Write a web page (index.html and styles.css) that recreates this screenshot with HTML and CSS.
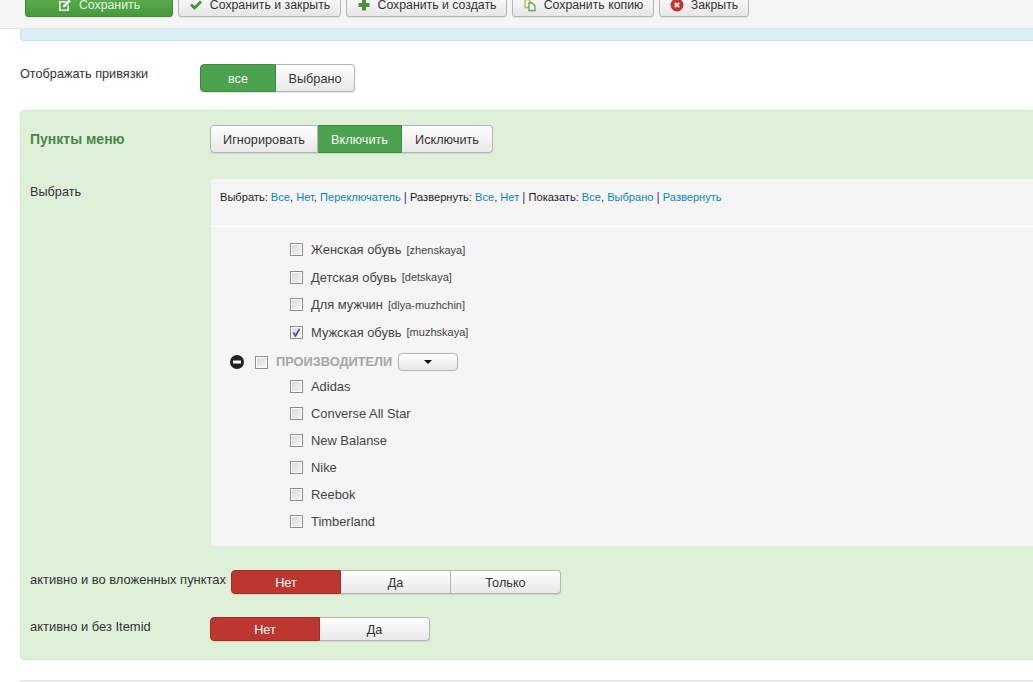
FILE: index.html
```html
<!DOCTYPE html>
<html lang="ru">
<head>
<meta charset="utf-8">
<title>Пункты меню</title>
<link rel="stylesheet" href="styles.css">
</head>
<body>
<div class="toolbar">
  <button class="tb tb-green w-save"><svg viewBox="0 0 14 14" class="ic"><path d="M1 3h8L7.500 4.500H2.500v7h7V8L11 6.500V13H1z" fill="#fff"/><path d="M5 7.500 11 1.500l1.800 1.800-6 6H5z" fill="#fff"/></svg>Сохранить</button>
  <button class="tb w-close"><svg viewBox="0 0 14 14" class="ic"><path d="M1 7.500 3 5.500 5.500 8 11 2.500 13 4.500 5.500 12z" fill="#4a8f3c"/></svg>Сохранить и закрыть</button>
  <button class="tb w-new"><svg viewBox="0 0 14 14" class="ic"><path d="M5 1.500h4v3.500h3.500v4H9v3.500H5V9H1.500V5H5z" fill="#4a8f3c"/></svg>Сохранить и создать</button>
  <button class="tb w-copy"><svg viewBox="0 0 14 14" class="ic"><path d="M2 1.500h5v8H2z" fill="none" stroke="#c9b23c" stroke-width="1.300"/><path d="M6 5h3l3 3v4.500H6z" fill="#fff" stroke="#4fa65a" stroke-width="1.300"/></svg>Сохранить копию</button>
  <button class="tb w-x"><svg viewBox="0 0 14 14" class="ic"><circle cx="7" cy="7" r="6.500" fill="#bd362f"/><path d="M4.800 4.800l4.400 4.400M9.200 4.800l-4.400 4.400" stroke="#fff" stroke-width="1.800"/></svg>Закрыть</button>
</div>
<main class="page">
  <div class="alert"></div>
  <div class="row-top">
    <div class="label-top">Отображать привязки</div>
    <div class="group">
      <span class="seg seg-green w-76">все</span>
      <span class="seg w-79">Выбрано</span>
    </div>
  </div>
  <section class="panel">
    <div class="panel-head">
      <h3 class="panel-title">Пункты меню</h3>
      <div class="group">
        <span class="seg w-107">Игнорировать</span>
        <span class="seg seg-green w-85">Включить</span>
        <span class="seg w-91">Исключить</span>
      </div>
    </div>
    <div class="select-row">
      <div class="select-label">Выбрать</div>
      <div class="tree-box">
        <div class="tree-tools">
          Выбрать: <a>Все</a>, <a>Нет</a>, <a>Переключатель</a> <i>|</i> Развернуть: <a>Все</a>, <a>Нет</a> <i>|</i> Показать: <a>Все</a>, <a>Выбрано</a> <i>|</i> <a>Развернуть</a>
        </div>
        <ul class="tree tree-a">
          <li><span class="cb"></span>Женская обувь <small>[zhenskaya]</small></li>
          <li><span class="cb"></span>Детская обувь <small>[detskaya]</small></li>
          <li><span class="cb"></span>Для мужчин <small>[dlya-muzhchin]</small></li>
          <li><span class="cb checked"><svg viewBox="0 0 13 13"><path d="M3.500 6.500 5.500 10 9.500 3" fill="none" stroke="#3d4f8f" stroke-width="1.600"/></svg></span>Мужская обувь <small>[muzhskaya]</small></li>
        </ul>
        <div class="tree-parent">
          <svg viewBox="0 0 14 14" class="minus"><circle cx="7" cy="7" r="7" fill="#222"/><rect x="3" y="5.500" width="8" height="3" fill="#fff"/></svg>
          <span class="cb"></span>
          <strong>ПРОИЗВОДИТЕЛИ</strong>
          <span class="drop"><b></b></span>
        </div>
        <ul class="tree tree-b">
          <li><span class="cb"></span>Adidas</li>
          <li><span class="cb"></span>Converse All Star</li>
          <li><span class="cb"></span>New Balanse</li>
          <li><span class="cb"></span>Nike</li>
          <li><span class="cb"></span>Reebok</li>
          <li><span class="cb"></span>Timberland</li>
        </ul>
      </div>
    </div>
    <div class="opt-row opt-1">
      <div class="opt-label">активно и во вложенных пунктах</div>
      <div class="group group-s">
        <span class="seg seg-red w-110">Нет</span>
        <span class="seg w-110">Да</span>
        <span class="seg w-110">Только</span>
      </div>
    </div>
    <div class="opt-row opt-2">
      <div class="opt-label opt-fixed">активно и без Itemid</div>
      <div class="group group-s">
        <span class="seg seg-red w-110">Нет</span>
        <span class="seg w-110">Да</span>
      </div>
    </div>
  </section>
  <div class="next-panel"></div>
</main>
</body>
</html>
```
FILE: styles.css
```css
* { box-sizing: border-box; }
html, body { margin: 0; padding: 0; height: 682px; overflow: hidden; background: #fff; }
body { font-family: "Liberation Sans", Arial, sans-serif; font-size: 12.7px; color: #333; }

.toolbar { height: 29px; background: #f5f5f5; border-bottom: 1px solid #e3e3e3; display: flex; align-items: flex-end; gap: 5px; padding: 0 0 11px 25px; }
.tb { flex: none; height: 26px; display: flex; align-items: center; justify-content: center; gap: 7px; padding: 2px 0 0; font: 12.3px "Liberation Sans", Arial, sans-serif; color: #333; border: 1px solid #b5b5b5; border-radius: 3px; background: linear-gradient(#fff, #e6e6e6); box-shadow: 0 1px 1px rgba(0,0,0,.08); }
.tb-green { background: linear-gradient(#62b14f, #459a3c); border-color: #43873c; color: #e8f4e4; }
.ic { width: 14px; height: 14px; flex: none; }
.w-save { width: 148px; }
.w-close { width: 163px; }
.w-new { width: 161px; }
.w-copy { width: 142px; }
.w-x { width: 90px; }

.page { padding: 0 0 0 20px; width: 1033px; }
.alert { height: 12px; background: #d9edf7; border-bottom: 1px solid #bce8f1; border-left: 1px solid #bce8f1; border-radius: 0 0 0 4px; }

.row-top { display: flex; margin-top: 23px; }
.label-top { width: 180px; padding-top: 3px; line-height: 15px; }
.group { display: flex; height: 28px; border-radius: 4px; box-shadow: 0 1px 1px rgba(0,0,0,.1); }
.group-s { height: 24px; }
.seg { display: flex; align-items: center; justify-content: center; height: 100%; padding-top: 1px; font-size: 12.7px; color: #333; border: 1px solid #b5b5b5; border-left-width: 0; background: linear-gradient(#fff, #e8e8e8); }
.seg:first-child { border-left-width: 1px; border-radius: 4px 0 0 4px; }
.seg:last-child { border-radius: 0 4px 4px 0; }
.seg-green { background: #4ca24f; border-color: #3f8a42; color: #f2f8f0; }
.seg-red { background: #bd362f; border-color: #a52d27; color: #fff; }
.w-76 { width: 76px; } .w-79 { width: 79px; } .w-107 { width: 108px; } .w-85 { width: 84px; } .w-91 { width: 91px; } .w-110 { width: 110px; }

.panel { margin-top: 18px; height: 550px; background: #dff0d8; border: 1px solid #d6e9c6; border-right: 0; border-radius: 4px 0 0 4px; padding: 14px 0 0 9px; }
.panel-head { display: flex; align-items: center; }
.panel-title { margin: 0; width: 180px; font-size: 14px; font-weight: bold; color: #468847; }
.select-row { display: flex; margin-top: 25px; }
.select-label { width: 180px; padding-top: 7px; line-height: 15px; }
.tree-box { flex: 1; min-width: 0; height: 369px; background: #f5f5f5; border: 1px solid #e8e8e8; border-right: 0; border-radius: 4px 0 0 4px; padding-top: 11px; }
.tree-tools { font-size: 11.1px; line-height: 15px; padding: 0 0 21px 9px; color: #222; height: 37px; border-bottom: 1px solid #fff; white-space: nowrap; }
.tree-tools a { color: #0a84c1; }
.tree-tools i { font-style: normal; color: #5d2a6e; font-size: 12px; }
.tree { list-style: none; margin: 0; padding: 0 0 0 79px; color: #444; font-size: 12.9px; }
.tree li { display: flex; align-items: center; white-space: pre; }
.tree small { font-size: 11px; margin-left: 1.500px; }
.tree-a { margin-top: 9px; }
.tree-a li { height: 27.500px; }
.tree-b li { height: 27px; }
.cb { flex: none; position: relative; width: 13px; height: 13px; margin-right: 8px; border: 1px solid #8e8e8e; background: linear-gradient(135deg, #d8d8d8, #f6f6f6); box-shadow: inset 0 0 0 1px #fff; }
.cb svg { position: absolute; left: -1px; top: -1px; width: 13px; height: 13px; }
.tree-parent { display: flex; align-items: center; height: 27px; padding: 5px 0 0 19px; }
.minus { width: 14px; height: 14px; flex: none; margin-right: 11px; }
.tree-parent .cb { margin-right: 8px; }
.tree-parent strong { color: #a6a6a6; font-size: 12.8px; width: 122px; white-space: nowrap; margin-top: -2px; }
.drop { width: 60px; height: 18px; display: flex; align-items: center; justify-content: center; border: 1px solid #b5b5b5; border-radius: 4px; background: linear-gradient(#fff, #e8e8e8); }
.drop b { width: 0; height: 0; border: 4px solid transparent; border-top-color: #111; border-bottom-width: 0; }

.opt-row { display: flex; }
.opt-1 { margin-top: 23px; }
.opt-2 { margin-top: 23px; }
.opt-label { color: #333; font-size: 12.95px; white-space: nowrap; padding-top: 2px; line-height: 15px; margin-right: 5px; }
.opt-fixed { width: 175px; }
.next-panel { margin-top: 20px; height: 20px; background: #f5f5f5; border-top: 1px solid #e3e3e3; }
```
